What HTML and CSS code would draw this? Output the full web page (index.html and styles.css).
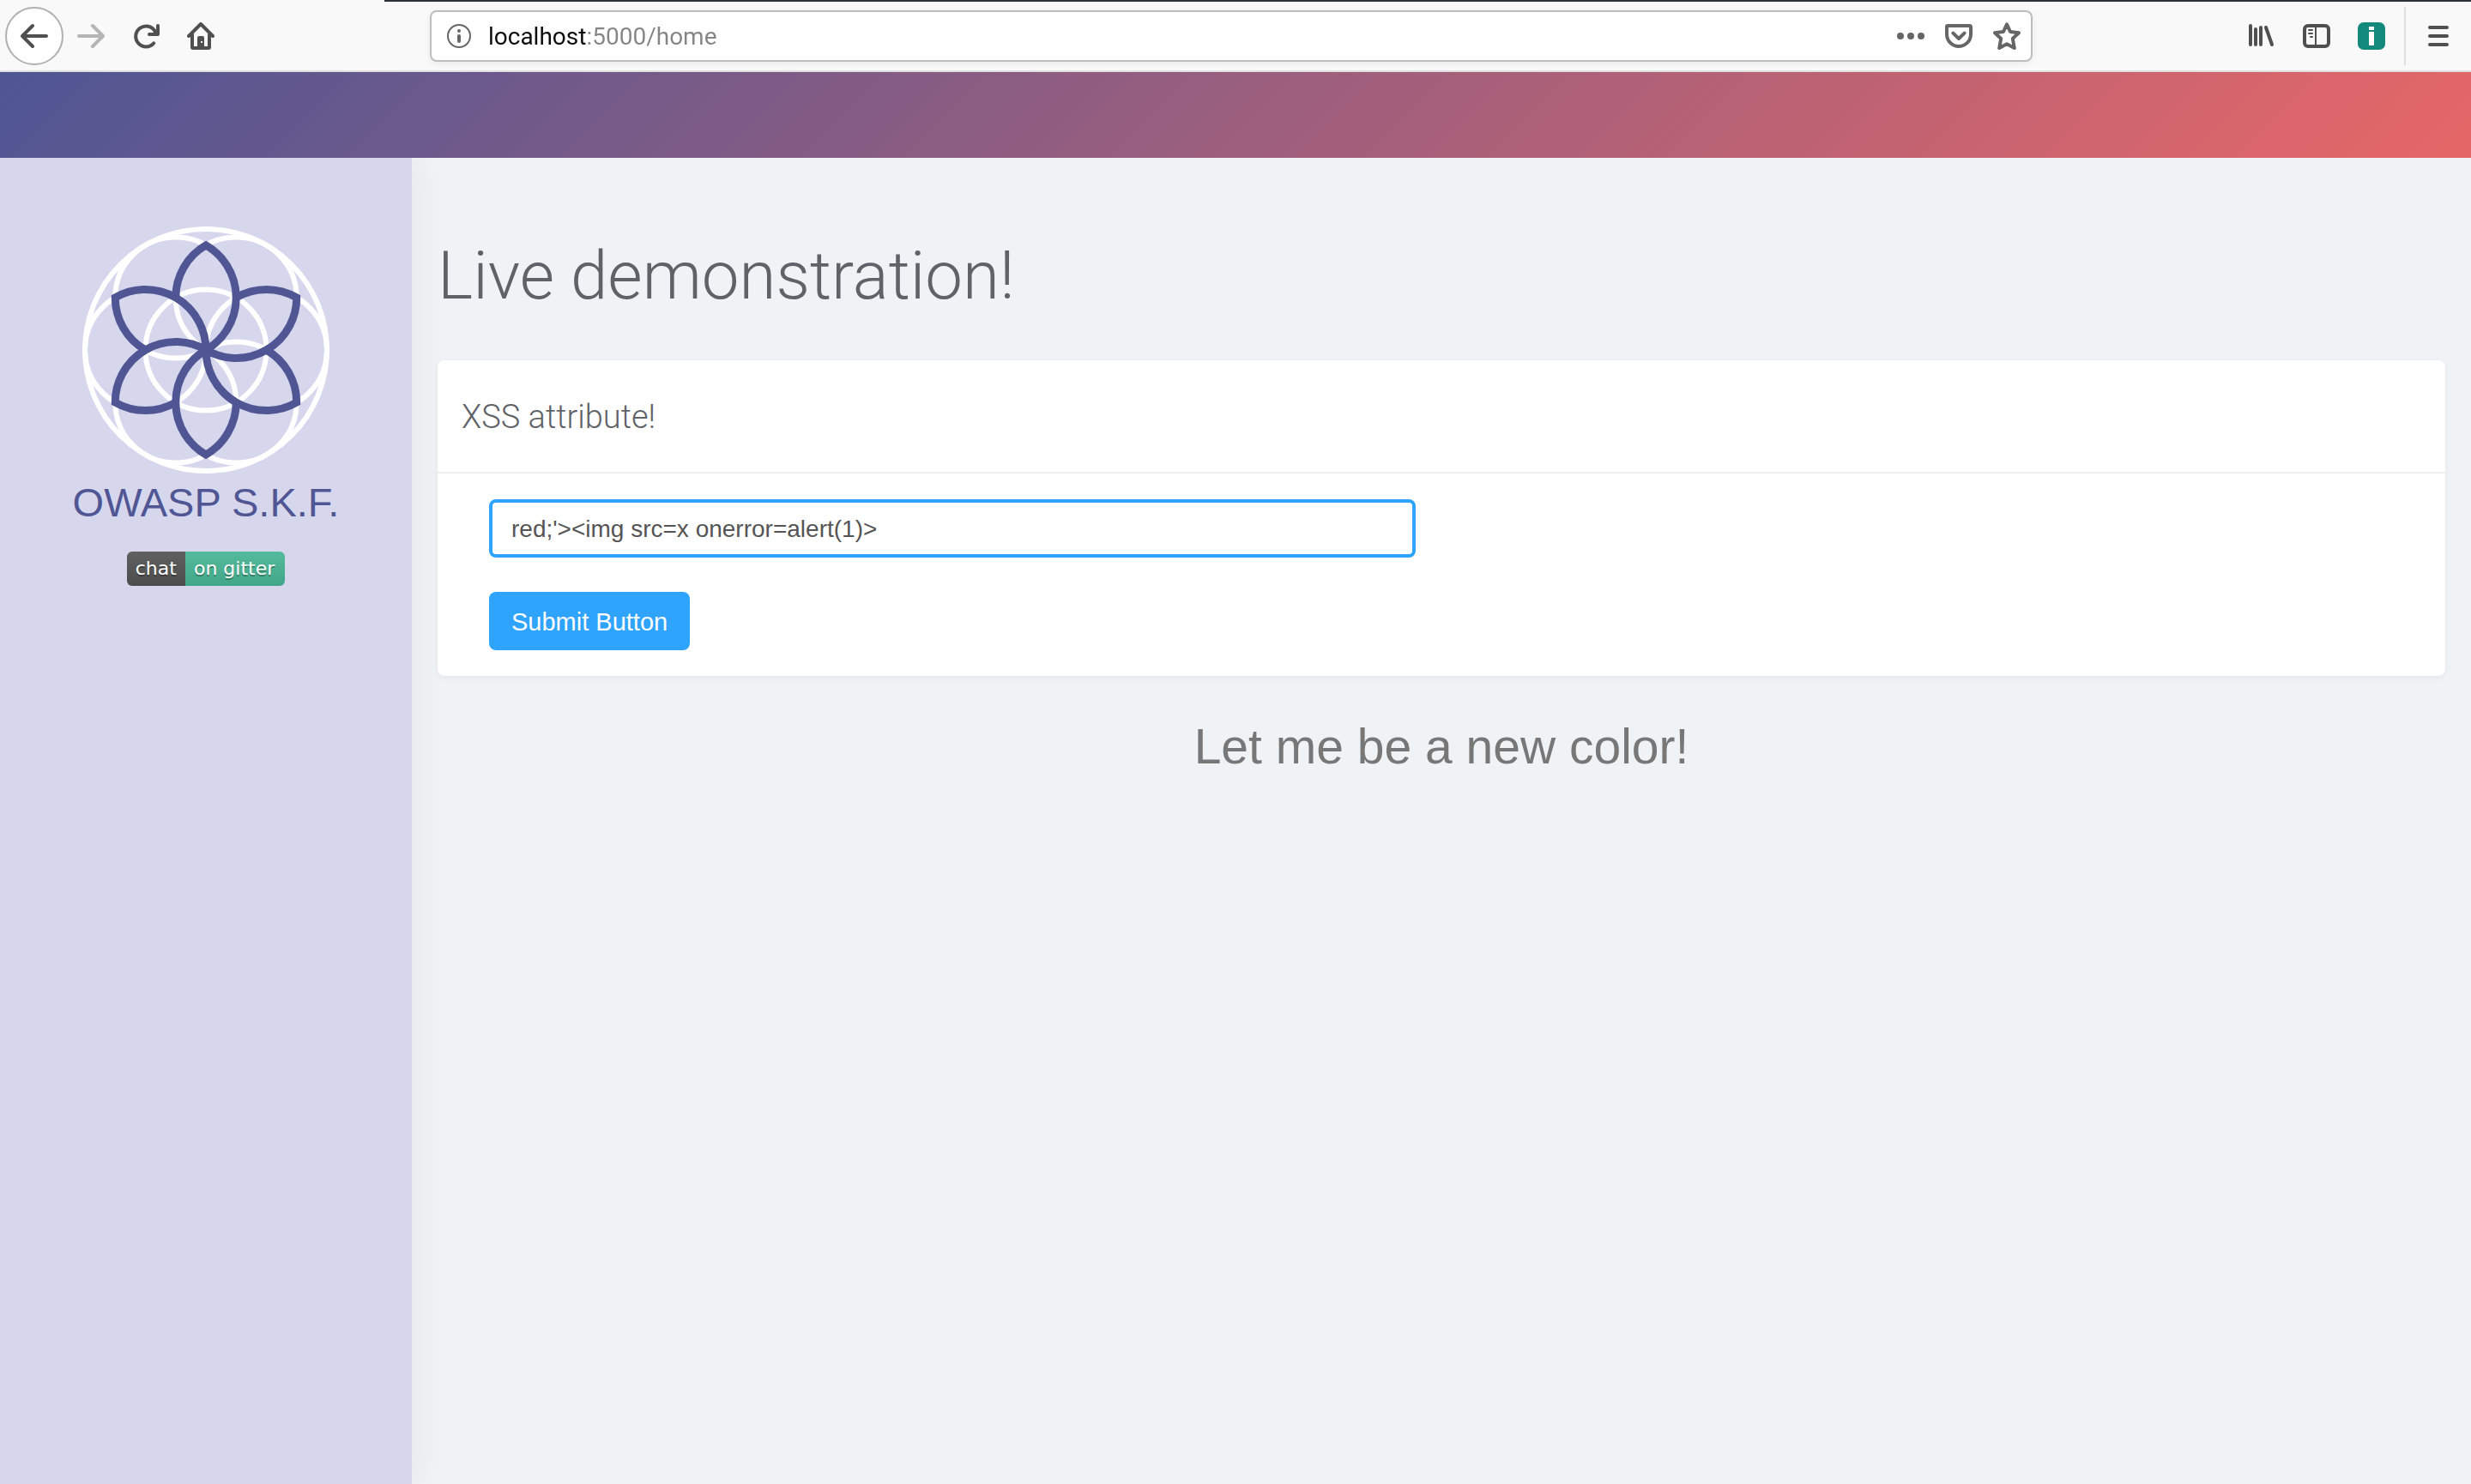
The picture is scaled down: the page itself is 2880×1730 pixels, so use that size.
FILE: index.html
```html
<!DOCTYPE html>
<html lang="en">
<head>
<meta charset="utf-8">
<title>Live demonstration!</title>
<link rel="stylesheet" href="styles.css">
</head>
<body>
<header class="toolbar">
  <nav class="toolbar-group" aria-label="Navigation">
    <button class="tool tool-back" type="button" aria-label="Back">
      <svg class="icon" viewBox="0 0 16 16"><path d="M15 8H1.4M7 2L1 8l6 6"/></svg>
    </button>
    <button class="tool tool-disabled" type="button" aria-label="Forward" disabled>
      <svg class="icon" viewBox="0 0 16 16"><path d="M1 8h13.6M9 2l6 6-6 6"/></svg>
    </button>
    <button class="tool" type="button" aria-label="Reload">
      <svg class="icon" viewBox="0 0 16 16"><path d="M12.6 12.2A6 6 0 1 1 13.4 5.4L13.8 6.6M15 2v5h-5"/><path class="solid" d="M12.4 6L15 3v4h-3z"/></svg>
    </button>
    <button class="tool" type="button" aria-label="Home">
      <svg class="icon" viewBox="0 0 16 16"><path d="M1 8l7-7 7 7M3 7v7.5a.5.5 0 0 0 .5.5h9a.5.5 0 0 0 .5-.5V7"/><path class="solid" fill-rule="evenodd" d="M6 15V9a1 1 0 0 1 1-1h2a1 1 0 0 1 1 1v6zM8.1 11v1h.9v-1z"/></svg>
    </button>
  </nav>
  <div class="urlbar">
    <svg class="icon-info" viewBox="0 0 28 28" aria-hidden="true"><circle cx="14" cy="14" r="13"/><circle class="solid" cx="14" cy="8" r="2"/><rect class="solid" x="12" y="12" width="4" height="10" rx="2"/></svg>
    <input class="url" type="text" aria-label="Address" value="localhost:5000/home">
    <div class="url-actions">
      <button class="action" type="button" aria-label="Page actions">
        <svg class="icon" viewBox="0 0 16 16"><g class="solid"><circle cx="2" cy="8" r="2"/><circle cx="8" cy="8" r="2"/><circle cx="14" cy="8" r="2"/></g></svg>
      </button>
      <button class="action" type="button" aria-label="Save to Pocket">
        <svg class="icon" viewBox="0 0 16 16"><path d="M1.6 2h12.8a.6.6 0 0 1 .6.6V7A7 7 0 0 1 1 7V2.600a.6.6 0 0 1 .6-.6zM4.700 6.300L8 9.500l3.300-3.200"/></svg>
      </button>
      <button class="action" type="button" aria-label="Bookmark">
        <svg class="icon" viewBox="0 0 16 16"><path d="M8 1.200l2 4.300 5 .6-3.600 3.400 1 5.500L8 12.600 3.600 15l1-5.500L1 6.100l5-.6z"/></svg>
      </button>
    </div>
  </div>
  <div class="toolbar-group">
    <button class="tool" type="button" aria-label="Library">
      <svg class="icon icon-wide" viewBox="0 0 32 32"><path d="M3 4v22M9 8v18M15 6v20M21 6l7 20"/></svg>
    </button>
    <button class="tool" type="button" aria-label="Sidebars">
      <svg class="icon" viewBox="0 0 32 32"><rect class="frame" x="2" y="4" width="28" height="24" rx="4"/><path class="thin" d="M15 5v22M7 9h4M7 13h4M9 17h2"/></svg>
    </button>
    <button class="tool" type="button" aria-label="Page information">
      <svg class="icon" viewBox="0 0 32 32"><rect class="addon" width="32" height="32" rx="7"/><path class="addon-mark" d="M13 5h6v4h-6zM13 11h6v16h-6z"/></svg>
    </button>
  </div>
  <button class="menu" type="button" aria-label="Open menu">
    <svg class="icon icon-wide" viewBox="0 0 32 32"><path d="M6 6h20M6 16h20M6 26h20"/></svg>
  </button>
</header>

<div class="banner"></div>

<div class="layout">
  <aside class="sidebar">
    <svg class="logo" viewBox="-144 -144 288 288" role="img" aria-label="OWASP S.K.F. logo">
      <defs><path id="petal" d="M0 0A70.500 70.500 0 0 0 0-122.100A70.500 70.500 0 0 0-35.250-61.050"/></defs>
      <g class="rings">
        <circle r="141"/><circle r="70.500"/>
        <circle cx="70.500" r="70.500"/><circle cx="-70.500" r="70.500"/>
        <circle cx="35.250" cy="-61.050" r="70.500"/><circle cx="-35.250" cy="-61.050" r="70.500"/>
        <circle cx="35.250" cy="61.050" r="70.500"/><circle cx="-35.250" cy="61.050" r="70.500"/>
      </g>
      <g class="petals">
        <use href="#petal"/><use href="#petal" transform="rotate(60)"/><use href="#petal" transform="rotate(120)"/>
        <use href="#petal" transform="rotate(180)"/><use href="#petal" transform="rotate(240)"/><use href="#petal" transform="rotate(300)"/>
      </g>
    </svg>
    <p class="brand">OWASP S.K.F.</p>
    <a class="badge" href="#"><span class="badge-label">chat</span><span class="badge-value">on gitter</span></a>
  </aside>

  <main class="content">
    <h1 class="title">Live demonstration!</h1>
    <section class="card">
      <h2 class="card-header">XSS attribute!</h2>
      <form class="card-body">
        <input class="field" type="text" aria-label="Color" value="red;'&gt;&lt;img src=x onerror=alert(1)&gt;">
        <button class="submit" type="button">Submit Button</button>
      </form>
    </section>
    <p class="result">Let me be a new color!</p>
  </main>
</div>
</body>
</html>
```
FILE: styles.css
```css
* {
  box-sizing: border-box;
}

body {
  display: flex;
  flex-direction: column;
  min-height: 100vh;
  margin: 0;
  background: #eff3f6;
  color: #5f6368;
  font-family: "Liberation Sans", Arial, sans-serif;
  font-size: 28px;
}

button,
input {
  font: inherit;
}

button {
  padding: 0;
  border: 0;
  background: none;
}

/* Browser toolbar */
.toolbar {
  display: flex;
  align-items: center;
  height: 84px;
  padding: 2px 0 0 6px;
  border-bottom: 2px solid #e0e0e1;
  background: linear-gradient(#2b3036, #2b3036) 448px 0 / 100% 2px no-repeat, #f9f9fa;
  color: #505051;
}

.toolbar-group {
  display: flex;
  flex: none;
  align-items: center;
}

.tool {
  display: grid;
  place-items: center;
  width: 64px;
  height: 68px;
  color: inherit;
}

.tool-back {
  width: 68px;
  border: 2px solid #b1b1b2;
  border-radius: 50%;
  background: #fff;
}

.tool-disabled {
  color: #b5b5b6;
}

.icon {
  display: block;
  width: 32px;
  height: 32px;
  fill: none;
  stroke: currentColor;
  stroke-width: 2;
  stroke-linecap: round;
  stroke-linejoin: round;
}

.icon-wide,
.icon .frame {
  stroke-width: 4;
}

.icon .thin {
  stroke-width: 2;
}

.icon .solid {
  fill: currentColor;
  stroke: none;
}

.icon .addon {
  fill: #12897b;
  stroke: none;
}

.icon .addon-mark {
  fill: #fff;
  stroke: none;
}

.urlbar {
  display: flex;
  flex: 0 1 65%;
  align-items: center;
  gap: 20px;
  height: 60px;
  margin: 0 auto;
  padding: 0 12px 0 18px;
  border: 2px solid #bdbdbe;
  border-radius: 8px;
  background: #fff;
  box-shadow: 0 2px 8px rgba(0, 0, 0, 0.06);
  color: #666667;
}

.icon-info {
  width: 28px;
  height: 28px;
  fill: none;
  stroke: currentColor;
  stroke-width: 2;
}

.icon-info .solid {
  fill: currentColor;
  stroke: none;
}

/* The host is dark, the port and path are grey */
.url {
  flex: 1;
  min-width: 0;
  padding: 2px 0 0;
  border: 0;
  outline: 0;
  background: linear-gradient(90deg, #0c0c0d 115px, #858585 115px);
  background-clip: text;
  color: #0c0c0d;
  font-family: Roboto, sans-serif;
  line-height: 40px;
  -webkit-text-fill-color: transparent;
}

.url-actions {
  display: flex;
  gap: 24px;
}

.action {
  color: inherit;
}

.menu {
  display: grid;
  flex: none;
  place-items: center;
  width: 78px;
  height: 68px;
  margin-left: 6px;
  border-left: 2px solid #dededf;
  color: inherit;
}

/* Page */
.banner {
  height: 100px;
  background: linear-gradient(135deg, #4f5694, #e66767);
}

.layout {
  display: flex;
  flex: 1;
}

.sidebar {
  display: flex;
  flex: none;
  flex-direction: column;
  align-items: center;
  width: 480px;
  padding-top: 80px;
  background: #d6d7ed;
  box-shadow: 0 0 40px rgba(0, 0, 0, 0.06);
  clip-path: inset(0 -60px 0 0);
}

.logo {
  width: 288px;
  height: 288px;
}

.rings {
  fill: none;
  stroke: #fff;
  stroke-width: 6;
}

.petals {
  fill: none;
  stroke: #505694;
  stroke-width: 9;
}

.brand {
  margin: 6px 0 29px;
  color: #505694;
  font-size: 47px;
  line-height: 56px;
}

.badge {
  display: flex;
  overflow: hidden;
  border-radius: 6px;
  color: #fff;
  font-family: "DejaVu Sans", sans-serif;
  font-size: 22px;
  line-height: 40px;
  text-decoration: none;
  text-shadow: 0 2px 0 rgba(1, 1, 1, 0.3);
}

.badge-label {
  padding: 0 10px;
  background: linear-gradient(#606060, #4c4c4c);
}

.badge-value {
  padding: 0 12px 0 10px;
  background: linear-gradient(#53ba9b, #42a688);
}

.content {
  flex: 1;
  min-width: 0;
  padding: 90px 30px;
}

.title {
  margin: 0 0 50px;
  font-family: Roboto, sans-serif;
  font-size: 78px;
  font-weight: 300;
  line-height: 96px;
}

.card {
  border-radius: 8px;
  background: #fff;
  box-shadow: 0 2px 6px rgba(0, 0, 0, 0.06);
}

.card-header {
  margin: 0;
  padding: 42px 28px 40px;
  border-bottom: 2px solid #eee;
  font-family: Roboto, sans-serif;
  font-size: 38px;
  font-weight: 300;
  line-height: 48px;
}

.card-body {
  display: flex;
  flex-direction: column;
  align-items: flex-start;
  gap: 40px;
  padding: 30px 60px;
}

.field {
  width: 1080px;
  max-width: 100%;
  height: 68px;
  padding: 2px 22px 0;
  border: 4px solid #2fa4ff;
  border-radius: 8px;
  outline: 0;
  background: #fff;
  color: #555;
}

.submit {
  height: 68px;
  padding: 2px 26px 0;
  border-radius: 8px;
  background: #2fa4ff;
  color: #fff;
  font-size: 29px;
}

.result {
  margin: 50px 0 0;
  color: #777;
  font-size: 57px;
  line-height: 64px;
  text-align: center;
}
```
